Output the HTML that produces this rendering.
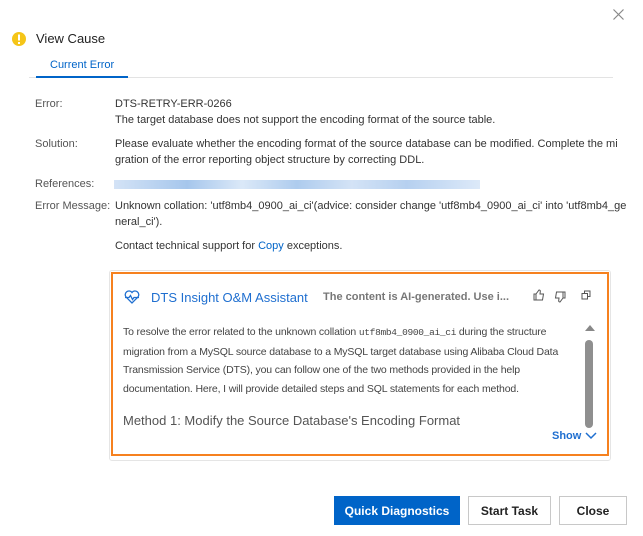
<!DOCTYPE html>
<html><head><meta charset="utf-8"><style>
*{margin:0;padding:0;box-sizing:border-box}
body{width:643px;height:536px;background:#fff;font-family:"Liberation Sans",sans-serif;font-size:11px;color:#333;position:relative;overflow:hidden}
.a{position:absolute;white-space:nowrap}
.lbl{left:35px;color:#555}
.val{left:115px;color:#333}
.btn{position:absolute;top:496px;height:29px;font-size:12px;font-weight:bold;display:flex;align-items:center;justify-content:center;border:1px solid #c8c8c8;color:#222;background:#fff}
</style></head><body>
<svg class="a" style="left:613px;top:9px" width="11" height="11" stroke="#888" stroke-width="1.2"><path d="M0.5 0.5L10.5 10.5M10.5 0.5L0.5 10.5"/></svg>
<svg class="a" style="left:11px;top:31px" width="16" height="16"><circle cx="8" cy="8" r="7" fill="#f5c518"/><rect x="7" y="3.5" width="2" height="6" fill="#fff"/><rect x="7" y="11" width="2" height="2" fill="#fff"/></svg>
<div class="a" style="left:36px;top:31px;font-size:13px;color:#222">View Cause</div>
<div class="a" style="left:50px;top:59px;font-size:11px;color:#0064c8">Current Error</div>
<div class="a" style="left:29px;top:77px;width:584px;height:1px;background:#e3e3e3"></div>
<div class="a" style="left:36px;top:76px;width:92px;height:2px;background:#0064c8"></div>
<div class="a lbl" style="top:98px">Error:</div>
<div class="a val" style="top:98px">DTS-RETRY-ERR-0266</div>
<div class="a val" style="top:114px">The target database does not support the encoding format of the source table.</div>
<div class="a lbl" style="top:138px">Solution:</div>
<div class="a val" style="top:138px">Please evaluate whether the encoding format of the source database can be modified. Complete the mi</div>
<div class="a val" style="top:154px">gration of the error reporting object structure by correcting DDL.</div>
<div class="a lbl" style="top:178px">References:</div>
<div class="a" style="left:114px;top:180px;width:366px;height:9px;background:linear-gradient(90deg,#cfe0f5,#9cc0ea 20%,#d7e6f7 35%,#a5c6ec 50%,#cfe0f5 65%,#aecbee 80%,#d9e7f8);opacity:.9"></div>
<div class="a lbl" style="top:200px">Error Message:</div>
<div class="a val" style="top:200px">Unknown collation: 'utf8mb4_0900_ai_ci'(advice: consider change 'utf8mb4_0900_ai_ci' into 'utf8mb4_ge</div>
<div class="a val" style="top:216px">neral_ci').</div>
<div class="a val" style="top:240px">Contact technical support for <span style="color:#0064c8">Copy</span> exceptions.</div>
<div class="a" style="left:109px;top:270px;width:502px;height:191px;border:1px solid #e5e5e5;border-radius:3px"></div>
<div class="a" style="left:111px;top:272px;width:498px;height:184px;border:2px solid #f6811f"></div>
<svg class="a" style="left:124px;top:290px" width="16" height="14" fill="none" stroke="#1f6fd0" stroke-width="1.3"><path d="M8 13 L2 7 A3.3 3.3 0 0 1 8 2.5 A3.3 3.3 0 0 1 14 7 Z"/><path d="M1 7.5 H5 L6.5 5.5 L8.5 9.5 L10 7.5 H15"/></svg>
<div class="a" style="left:151px;top:290px;font-size:13px;color:#1f6fd0">DTS Insight O&amp;M Assistant</div>
<div class="a" style="left:323px;top:291px;font-size:11px;color:#777;font-weight:bold">The content is AI-generated. Use i...</div>
<svg class="a" style="left:533px;top:289px" width="12" height="12" fill="none" stroke="#555" stroke-width="1"><path d="M1 5h2v6H1z M3 5l3-4c1 0 1.5 .6 1.3 1.5L7 5h3.5l-1 6H3"/></svg>
<svg class="a" style="left:554px;top:291px" width="12" height="12" fill="none" stroke="#555" stroke-width="1"><path d="M9 1h2v6H9z M9 7l-3 4c-1 0-1.5-.6-1.3-1.5L5 7H1.5l1-6H9"/></svg>
<svg class="a" style="left:581px;top:290px" width="10" height="10" fill="none" stroke="#555" stroke-width="1"><path d="M1 3.5h5.5V9H1z M3.5 3.5V1H9v5.5H6.5"/></svg>
<div class="a" style="left:123px;top:323px;font-size:10.5px;letter-spacing:-0.15px;line-height:18.5px;color:#444;white-space:normal;width:462px">To resolve the error related to the unknown collation <span style="font-family:'Liberation Mono',monospace;font-size:9.5px;letter-spacing:-0.3px">utf8mb4_0900_ai_ci</span> during the structure migration from a MySQL source database to a MySQL target database using Alibaba Cloud Data Transmission Service (DTS), you can follow one of the two methods provided in the help documentation. Here, I will provide detailed steps and SQL statements for each method.</div>
<div class="a" style="left:123px;top:413px;font-size:13px;color:#555">Method 1: Modify the Source Database's Encoding Format</div>
<div class="a" style="left:585px;top:325px;width:0;height:0;border-left:5px solid transparent;border-right:5px solid transparent;border-bottom:6px solid #888"></div>
<div class="a" style="left:585px;top:340px;width:8px;height:88px;background:#8f8f8f;border-radius:4px"></div>
<div class="a" style="left:552px;top:430px;font-size:11px;font-weight:bold;color:#1f6fd0">Show</div>
<svg class="a" style="left:585px;top:431px" width="12" height="9" fill="none" stroke="#1f6fd0" stroke-width="1.5"><path d="M1 2l5 5 5-5"/></svg>
<div class="btn" style="left:334px;width:126px;background:#0064c8;border-color:#0064c8;color:#fff">Quick Diagnostics</div>
<div class="btn" style="left:468px;width:83px">Start Task</div>
<div class="btn" style="left:559px;width:68px">Close</div>
</body></html>
